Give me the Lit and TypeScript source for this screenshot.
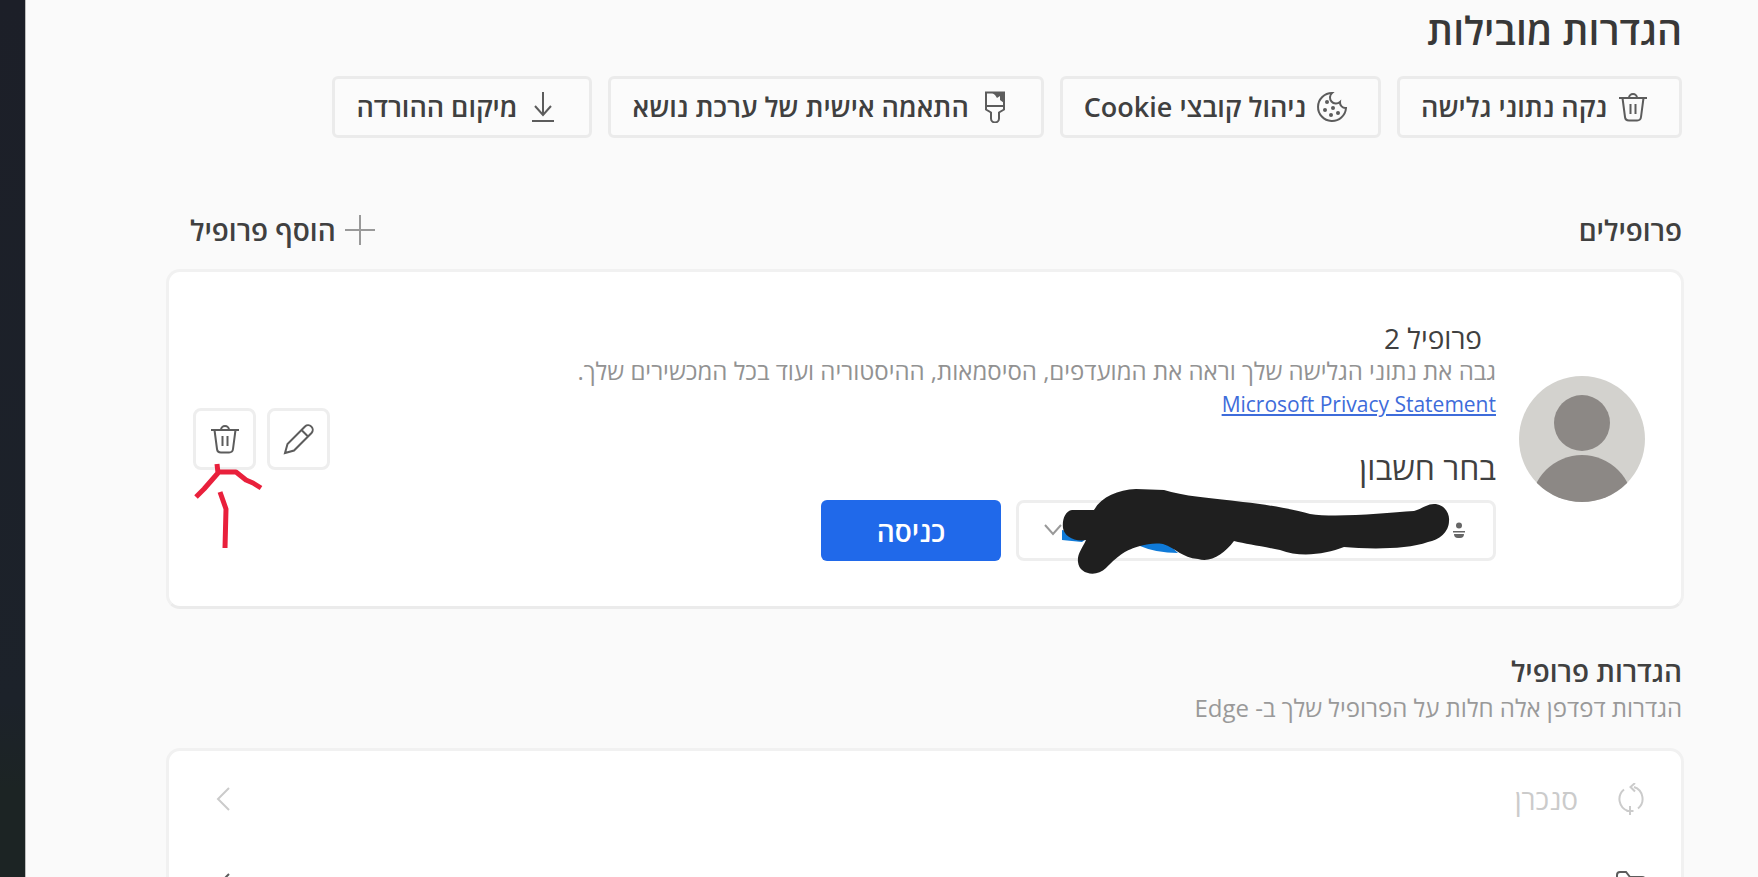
import { LitElement, html, css, svg } from "lit";
import { customElement } from "lit/decorators.js";

const trash = svg`<path d="M2 7h28M12 7a4 4 0 0 1 8 0M5.500 7l2.500 19a4 4 0 0 0 4 3.500h8a4 4 0 0 0 4-3.500L26.500 7M13.500 13v10M18.500 13v10"/>`;
const cookie = svg`<path d="M16 2a14 14 0 1 0 14 15 5.500 5.500 0 0 1-6-6 6 6 0 0 1-8-9z"/><g fill="currentColor" stroke="none"><circle cx="11" cy="11" r="2"/><circle cx="9" cy="19" r="2"/><circle cx="17" cy="17" r="2"/><circle cx="15" cy="24" r="2"/><circle cx="22" cy="22" r="2"/></g>`;
const brush = svg`<path d="M7 1.500h18v17l-5 3v6a4 4 0 0 1-8 0v-6l-5-3zM7 15h18"/><path fill="currentColor" stroke="none" d="M12 1h13v11l-4-3V5l-3 2-2-3z"/>`;
const download = svg`<path d="M16 1v23M8 15l8 9 8-9M5 30h22"/>`;
const plus = svg`<path d="M16 1v30M1 16h30"/>`;
const pencil = svg`<path d="M2 30l2.500-9L22 3.500a4.600 4.600 0 0 1 6.500 6.500L11 27.500zM18.500 7l6.500 6.500"/>`;
const sync = svg`<path d="M9 6.500a12.500 12.500 0 0 0 4 21.500M23 25.500a12.500 12.500 0 0 0-4-21.500M20 0l-4.500 4 4.500 4.500M15 23v9M11.500 28h7"/>`;
const back = svg`<path d="M22 5L11 16l11 11"/>`;
const folder = svg`<path d="M2 28V6a3 3 0 0 1 3-3h6l4 5h12a3 3 0 0 1 3 3v17z"/>`;

const icon = (shape: unknown) =>
  html`<svg class="icon" viewBox="0 0 32 32" aria-hidden="true">${shape}</svg>`;

@customElement("app-root")
export class AppRoot extends LitElement {
  static styles = css`
    :host {
      display: flex;
      height: 100vh;
      overflow: hidden;
      direction: rtl;
      background: #fafafa;
      color: #404040;
      font-family: "Open Sans", "Noto Sans", "DejaVu Sans", sans-serif;
      font-size: 28px;
      line-height: 32px;
    }
    * { box-sizing: border-box; }
    h1, h2, h3, p { margin: 0; }
    button, select { font: inherit; color: inherit; }
    .icon {
      width: 32px;
      height: 32px;
      flex: none;
      fill: none;
      stroke: currentColor;
      stroke-width: 2;
      color: #5c5c5c;
    }
    main {
      flex: 1;
      min-width: 0;
      padding-top: 10px;
      padding-inline: 74px 140px;
    }
    .edge {
      width: 26px;
      flex: none;
      background: linear-gradient(#1c1f28, #1c222a 80%, #1c2424 90%);
      border-inline-start: 1px solid #bdbdbd;
    }
    h1 { font-size: 39px; line-height: 40px; font-weight: 600; color: #383838; padding-inline: 2px; }
    h2 { font-size: 28px; line-height: 32px; font-weight: 600; }
    .shortcuts { display: flex; gap: 16px; margin-top: 26px; padding-inline: 2px; }
    .shortcut {
      display: flex;
      align-items: center;
      gap: 10px;
      height: 62px;
      padding: 0 30px 0 21px;
      border: 3px solid #ebebeb;
      border-radius: 6px;
      background: #fbfbfb;
      font-size: 27px;
      font-weight: 600;
      white-space: nowrap;
    }
    .bar { display: flex; justify-content: space-between; margin-top: 76px; padding: 0 2px 0 24px; }
    .add {
      display: flex;
      align-items: center;
      gap: 8px;
      padding: 0;
      border: 0;
      background: none;
      font-weight: 600;
    }
    .add .icon { color: #999; }
    .card {
      position: relative;
      border: 3px solid #f1f1f1;
      border-radius: 14px;
      background: #fff;
    }
    .profile {
      display: flex;
      align-items: center;
      gap: 23px;
      margin-top: 23px;
      padding: 50px 36px 45px 24px;
      border-bottom-color: #ebebeb;
    }
    .avatar { width: 126px; height: 126px; flex: none; margin-bottom: 6px; }
    .info { flex: 1; min-width: 0; }
    .name { font-weight: 400; font-size: 28px; padding-inline-start: 14px; }
    .note { font-size: 24px; line-height: 34px; color: #929292; }
    .link { display: block; width: fit-content; font-size: 21px; line-height: 32px; color: #3e6cda; }
    .choose { display: block; margin: 32px 0 16px; font-size: 32px; }
    .row { display: flex; gap: 15px; }
    .account { position: relative; width: 480px; height: 61px; }
    .account select {
      width: 100%;
      height: 100%;
      appearance: none;
      border: 3px solid #eee;
      border-radius: 8px;
      background: #fff;
    }
    .person, .down { position: absolute; pointer-events: none; stroke: none; fill: #666; }
    .person { top: 22px; right: 31px; width: 12px; height: 16px; }
    .down { top: 23px; left: 28px; width: 18px; height: 14px; fill: none; stroke: #999; stroke-width: 2; }
    .marker { position: absolute; top: -12px; left: 40px; width: 400px; height: 92px; pointer-events: none; }
    .enter {
      width: 180px;
      height: 61px;
      border: 0;
      border-radius: 6px;
      background: #2069ea;
      color: #fff;
      font-weight: 600;
    }
    .tools { position: relative; display: flex; gap: 11px; margin-bottom: 6px; }
    .tool {
      display: grid;
      place-items: center;
      width: 63px;
      height: 62px;
      padding: 0;
      border: 3px solid #eee;
      border-radius: 8px;
      background: #fff;
    }
    .arrow { position: absolute; top: 54px; left: 0; width: 72px; height: 90px; pointer-events: none; }
    .section { margin-top: 46px; padding-inline: 2px; }
    .section p { font-size: 24px; color: #999; margin-top: 5px; }
    .list { margin-top: 24px; padding-top: 5px; }
    .item {
      display: flex;
      align-items: center;
      gap: 37px;
      width: 100%;
      height: 86px;
      padding: 0 34px 0 38px;
      border: 0;
      background: none;
      text-align: start;
    }
    .item span { flex: 1; }
    .off, .off .icon { color: #cbcbcb; }
  `;

  render() {
    return html`
      <main>
        <h1>הגדרות מובילות</h1>
        <div class="shortcuts">
          <button class="shortcut">${icon(trash)}נקה נתוני גלישה</button>
          <button class="shortcut">${icon(cookie)}ניהול קובצי Cookie</button>
          <button class="shortcut">${icon(brush)}התאמה אישית של ערכת נושא</button>
          <button class="shortcut">${icon(download)}מיקום ההורדה</button>
        </div>

        <div class="bar">
          <h2>פרופילים</h2>
          <button class="add">${icon(plus)}הוסף פרופיל</button>
        </div>
        <section class="card profile">
          <svg class="avatar" viewBox="0 0 126 126" aria-hidden="true">
            <defs><clipPath id="disc"><circle cx="63" cy="63" r="63" /></clipPath></defs>
            <g clip-path="url(#disc)">
              <rect width="126" height="126" fill="#d3d2ce" />
              <circle cx="63" cy="47" r="28" fill="#8c8885" />
              <circle cx="63" cy="130" r="51" fill="#8c8885" />
            </g>
          </svg>
          <div class="info">
            <h3 class="name">פרופיל 2</h3>
            <p class="note">גבה את נתוני הגלישה שלך וראה את המועדפים, הסיסמאות, ההיסטוריה ועוד בכל המכשירים שלך.</p>
            <a class="link" href="#privacy">Microsoft Privacy Statement</a>
            <label class="choose" for="account">בחר חשבון</label>
            <div class="row">
              <div class="account">
                <select id="account"><option></option></select>
                <svg class="person" viewBox="0 0 12 16" aria-hidden="true">
                  <circle cx="6" cy="3.500" r="3" /><path d="M0 9h12v1.500H0zM1 12h10q0 4-4 4H5q-4 0-4-4z" />
                </svg>
                <svg class="down" viewBox="0 0 18 14" aria-hidden="true"><path d="M1 2l8 9 8-9" /></svg>
                <svg class="marker" viewBox="0 0 400 92" aria-hidden="true">
                  <path fill="#0f7ad8" d="M6 42L6 52L26 54L34 48zM84 57L108 52L122 65Q100 65 84 58z" />
                  <path fill="#1f1f1f" d="M16 22L38 22C46 8 62 2 80 1L108 2C126 8 155 10 187 14C215 17 240 22 254 26C280 30 330 25 358 23C368 20 371 16 378 16C388 16 394 25 393 33C393 44 383 52 372 54C350 62 310 61 288 59C270 66 245 70 224 62C205 58 190 56 178 53C168 66 155 75 142 71C126 70 120 60 107 56C98 55 92 56 84 58C70 62 64 66 50 80C40 90 23 86 22 74C21 66 26 61 30 52C18 54 8 48 7 40C6 32 9 23 16 22z" />
                </svg>
              </div>
              <button class="enter">כניסה</button>
            </div>
          </div>
          <div class="tools">
            <button class="tool" aria-label="עריכה">${icon(pencil)}</button>
            <button class="tool" aria-label="מחיקה">${icon(trash)}</button>
            <svg class="arrow" viewBox="0 0 72 90" fill="none" stroke="#e9203c" stroke-width="5" stroke-linejoin="round" aria-hidden="true">
              <path d="M3 35L11 27 25 11 24 2M24 10L43 10 53 18 60 21 68 26M27 30L33 47 32 86" />
            </svg>
          </div>
        </section>

        <div class="section">
          <h2>הגדרות פרופיל</h2>
          <p>הגדרות דפדפן אלה חלות על הפרופיל שלך ב- Edge</p>
        </div>
        <section class="card list">
          <button class="item off" disabled>${icon(sync)}<span>סנכרן</span>${icon(back)}</button>
          <button class="item" aria-label="פריט נוסף">${icon(folder)}<span></span>${icon(back)}</button>
        </section>
      </main>
      <div class="edge"></div>
    `;
  }
}
